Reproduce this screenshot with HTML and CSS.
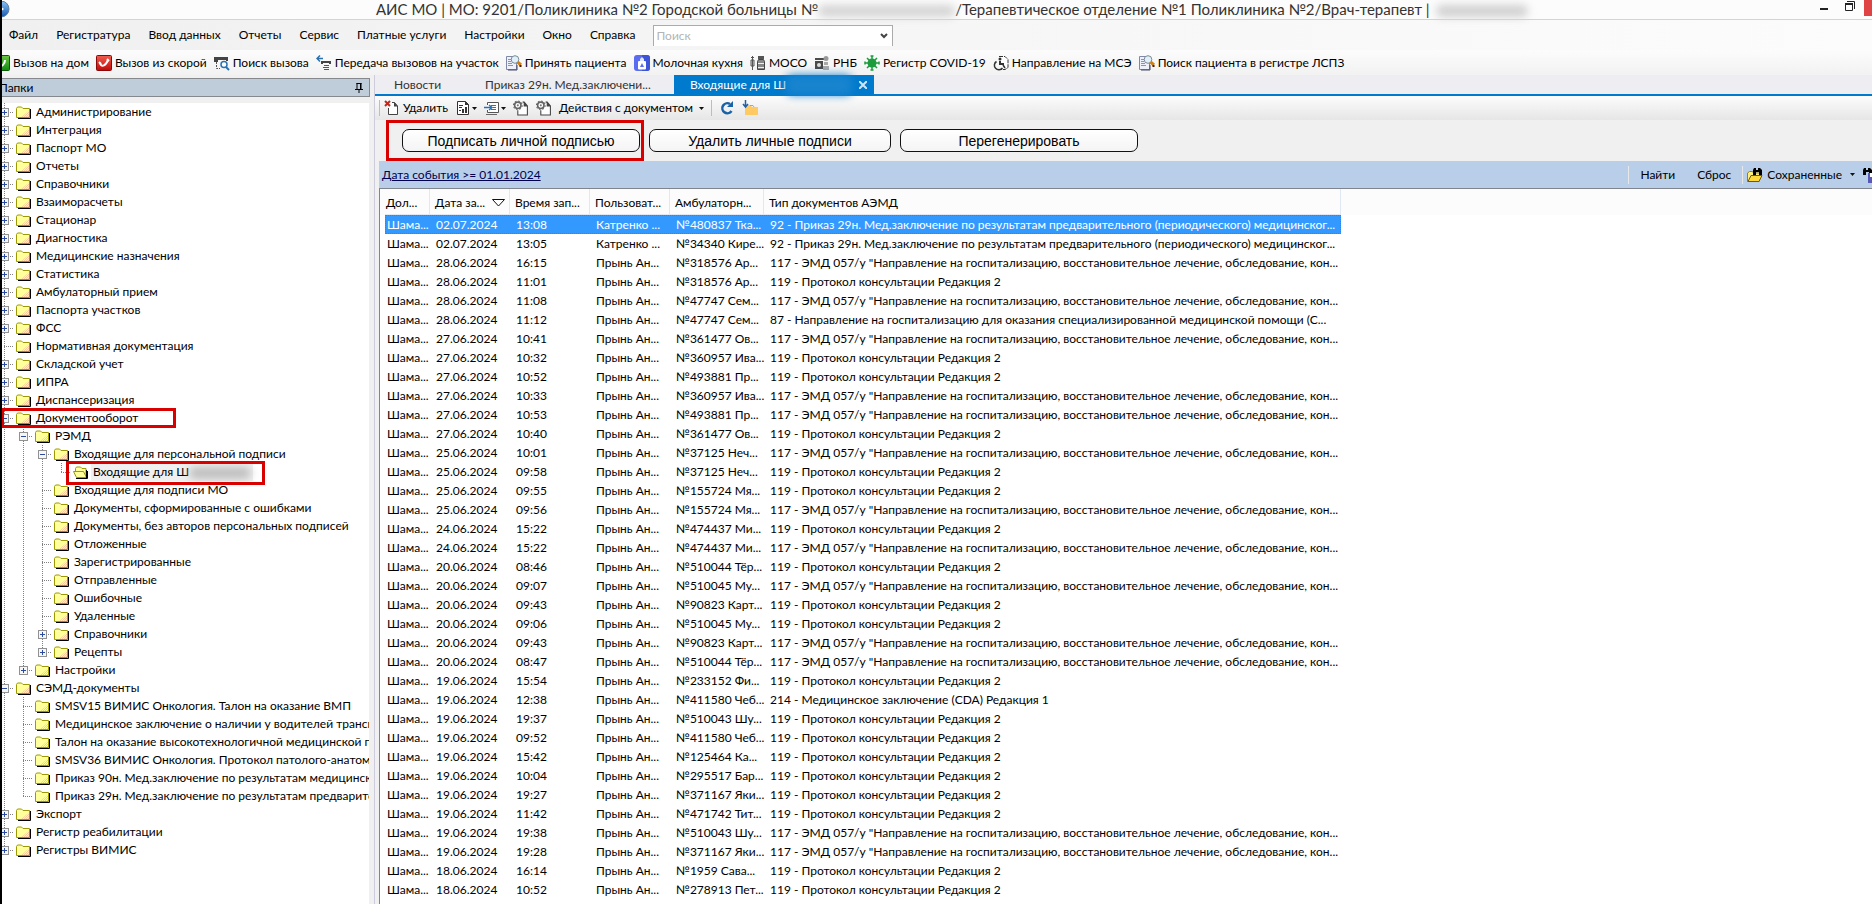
FILE: index.html
```html
<!DOCTYPE html>
<html lang="ru">
<head>
  <meta charset="UTF-8">
  <title>АИС МО</title>
  <link rel="stylesheet" href="styles.css">
</head>
<body>

  <!-- общие значки -->
  <svg class="sprite" aria-hidden="true">
    <defs>
      <pattern id="dither" width="2" height="2" patternUnits="userSpaceOnUse">
        <rect width="1" height="1" fill="#ffc89a"/><rect x="1" y="1" width="1" height="1" fill="#ffc89a"/>
      </pattern>
      <linearGradient id="ball" x1="0" y1="0" x2="0" y2="1">
        <stop offset="0" stop-color="#8cc4f4"/><stop offset="1" stop-color="#1558b0"/>
      </linearGradient>
      <linearGradient id="green" x1="0" y1="0" x2="0" y2="1">
        <stop offset="0" stop-color="#6cc644"/><stop offset="1" stop-color="#0f8a0f"/>
      </linearGradient>
      <linearGradient id="red" x1="0" y1="0" x2="0" y2="1">
        <stop offset="0" stop-color="#f06050"/><stop offset="1" stop-color="#c00808"/>
      </linearGradient>
    </defs>
    <symbol id="folder" viewBox="0 0 15 13">
      <path d="M2 12.5h12.5V3" fill="none" stroke="#000"/>
      <path d="M.5 11.5v-9l1-1.500h4l1.500 1.500h6.500v9z" fill="#ffff9c" stroke="#9c9a00"/>
      <path d="M6 10.500l7-6v6.500H6z" fill="url(#dither)"/>
      <path d="M1 3.500h12" stroke="#fff"/>
    </symbol>
    <symbol id="folder-open" viewBox="0 0 15 13">
      <path d="M3 12.500h11.500V5" fill="none" stroke="#000"/>
      <path d="M2.500 6V2.500l1-1.500h4l1.500 1.500h4v9" fill="#ffff9c" stroke="#9c9a00"/>
      <path d="M.5 5.500h10l3 6h-10z" fill="#ffff9c" stroke="#9c9a00"/>
      <path d="M13.500 4v8" stroke="#000"/>
    </symbol>
    <symbol id="plus" viewBox="0 0 9 9">
      <rect x=".5" y=".5" width="8" height="8" fill="#f6f6f6" stroke="#919191"/>
      <path d="M2 4.500h5M4.500 2v5" stroke="#2c4aa0"/>
    </symbol>
    <symbol id="minus" viewBox="0 0 9 9">
      <rect x=".5" y=".5" width="8" height="8" fill="#f6f6f6" stroke="#919191"/>
      <path d="M2 4.500h5" stroke="#2c4aa0"/>
    </symbol>
    <symbol id="caret" viewBox="0 0 5 3"><path d="M0 0h5L2.500 3z" fill="#111"/></symbol>
    <symbol id="doc-search" viewBox="0 0 16 16">
      <path d="M.5 1.500h10v13H.5z" fill="#eef0fa" stroke="#8088a8"/>
      <path d="M2 4.500h4M2 6.500h3M2 8.500h4M2 10.500h5" stroke="#8a92b8"/>
      <path d="M11 10v5H2" fill="none" stroke="#44486c"/>
      <circle cx="9" cy="4.500" r="3.800" fill="#dff0fa" stroke="#7c8a96"/>
      <path d="M11.500 7l3.500 3" stroke="#d08010" stroke-width="3"/>
      <path d="M14.500 10v2" stroke="#402000" stroke-width="2"/>
    </symbol>
    <symbol id="gear-doc" viewBox="0 0 15 14">
      <path d="M4.500 9v4.500h9V5l-3-3.500H9" fill="#fff" stroke="#444"/>
      <path d="M10 1v4.500h4z" fill="#444"/>
      <circle cx="4.500" cy="4.500" r="3" fill="#fff" stroke="#666" stroke-width="1.500"/>
      <circle cx="4.500" cy="4.500" r="4.100" fill="none" stroke="#666" stroke-dasharray="1.500 1.700"/>
      <circle cx="4.500" cy="4.500" r="1" fill="#777"/>
    </symbol>
  </svg>

  <div class="window">

    <header class="title-bar">
      <svg class="logo" viewBox="0 0 18 18"><circle cx="7" cy="8" r="8" fill="url(#ball)" stroke="#5a7fa8"/><path d="M5 4v8l5-4z" fill="#fff"/></svg>
      <h1>АИС МО | МО: 9201/Поликлиника №2 Городской больницы №<span class="smudge smudge-hospital"></span>/Терапевтическое отделение №1 Поликлиника №2/Врач-терапевт |<span class="smudge smudge-doctor"></span></h1>
      <div class="window-buttons">
        <button aria-label="Свернуть"><svg width="8" height="10" viewBox="0 0 8 10"><path d="M0 9h8" stroke="#222" stroke-width="2"/></svg></button>
        <button aria-label="Восстановить"><svg width="10" height="12" viewBox="0 0 10 12"><path d="M2 1.500h7.500V9M.5 4v6.500h7V4" fill="none" stroke="#222"/><path d="M0 4h8" stroke="#222" stroke-width="2"/></svg></button>
        <button class="close" aria-label="Закрыть"></button>
      </div>
    </header>

    <nav class="menu">
      <button>Файл</button>
      <button>Регистратура</button>
      <button>Ввод данных</button>
      <button>Отчеты</button>
      <button>Сервис</button>
      <button>Платные услуги</button>
      <button>Настройки</button>
      <button>Окно</button>
      <button>Справка</button>
      <div class="search">
        <input type="text" placeholder="Поиск" aria-label="Поиск">
        <button aria-label="Открыть список"><svg width="8" height="6" viewBox="0 0 8 6"><path d="M1 1l3 3 3-3" fill="none" stroke="#444" stroke-width="2"/></svg></button>
      </div>
    </nav>

    <div class="toolbar">
      <button><svg viewBox="0 0 16 16"><rect x=".5" y=".5" width="15" height="15" rx="1" fill="url(#green)" stroke="#0a5a0a"/><path d="M4 11c4 1 7-2 7-6" fill="none" stroke="#fff" stroke-width="2"/></svg>Вызов на дом</button>
      <button><svg viewBox="0 0 16 16"><rect x=".5" y=".5" width="15" height="15" rx="1" fill="url(#red)" stroke="#8a0808"/><path d="M4 8c1 4 5 4 8-3" fill="none" stroke="#fff" stroke-width="2"/><path d="M3 7l2 2M11 4l2 2" stroke="#fff" stroke-width="2"/></svg>Вызов из скорой</button>
      <button><svg viewBox="0 0 16 16"><path d="M0 2h14v4h-2V5H4v2H0z" fill="#444"/><path d="M2.500 7v6.500H6" fill="none" stroke="#555" stroke-dasharray="2 1"/><circle cx="10" cy="9.500" r="3" fill="#fff" stroke="#2a72b0" stroke-width="1.500"/><path d="M12 12l3 3" stroke="#2a72b0" stroke-width="2"/></svg>Поиск вызова</button>
      <button><svg viewBox="0 0 16 16"><path d="M7 3.500H1M4 .500l-3 3 3 3" fill="none" stroke="#2a72b0" stroke-width="1.500"/><path d="M5 6h10v3h-2V8H7v1H5z" fill="#444"/><path d="M8 10.500h5M7 12.500h6M8 14.500h5" stroke="#555"/></svg>Передача вызовов на участок</button>
      <button><svg><use href="#doc-search"/></svg>Принять пациента</button>
      <button><svg viewBox="0 0 16 16"><rect width="16" height="16" rx="3" fill="#5b6cf0"/><path d="M8 0h5a3 3 0 0 1 3 3v10a3 3 0 0 1-3 3H8z" fill="#3c55d8"/><rect x="4" y="6" width="8" height="8.500" rx="1" fill="#fff"/><path d="M6 6V4l2-2 2 2v2z" fill="#dfe4ff"/><path d="M6 12l2-4 2 4z" fill="#5b6cf0"/></svg>Молочная кухня</button>
      <button><svg viewBox="0 0 16 16"><path d="M2.500 1v14M1 5h3v6H1zM1 2.500h3" fill="#ddd" stroke="#555"/><path d="M8 1h6v3H8z" fill="#555"/><path d="M7.500 6.500l1-2h5l1 2v8h-7z" fill="#888" stroke="#444"/><path d="M8 8.500h6M8 12.500h6" stroke="#eee"/></svg>МОСО</button>
      <button><svg viewBox="0 0 16 16"><path d="M1 3h9v2H1zM1 6h8v8H1z" fill="#4a4a4a"/><circle cx="5" cy="10" r="2" fill="#ddd"/><circle cx="12" cy="3.500" r="2.500" fill="#999"/><path d="M10 7h4v3h-4zM9 11h6v4H9z" fill="#aaa"/></svg>РНБ</button>
      <button><svg viewBox="0 0 16 16"><circle cx="8" cy="8" r="4.500" fill="#1c9c3c"/><path d="M8 1v14M1 8h14M3 3l10 10M13 3L3 13" stroke="#1c9c3c" stroke-width="1.500"/><path d="M6.500 1h3M6.500 15h3M1 6.500v3M15 6.500v3" stroke="#1c9c3c" stroke-width="1.500"/></svg>Регистр COVID-19</button>
      <button><svg viewBox="0 0 16 16"><path d="M6 1.500h6l3 3v8l-3 2H8" fill="#fff" stroke="#333" stroke-dasharray="4 1"/><circle cx="7" cy="4" r="1.500" fill="#333"/><path d="M6 6h2v2h3v2H6z" fill="#333"/><path d="M3.500 6.500a4.500 4.500 0 1 0 6 6.500" fill="none" stroke="#333" stroke-width="1.500"/><path d="M10 10l2 3" stroke="#333" stroke-width="1.500"/></svg>Направление на МСЭ</button>
      <button><svg><use href="#doc-search"/></svg>Поиск пациента в регистре ЛСПЗ</button>
    </div>

    <div class="workspace">

      <aside class="folders">
        <div class="panel-head">
          <span>Папки</span>
          <button aria-label="Закрепить"><svg width="8" height="10" viewBox="0 0 8 10"><path d="M2 0v6M6 0v6" stroke="#000"/><path d="M1.500 .500h5M0 6.500h8M4 7v3" stroke="#000"/><path d="M5.500 0v6" stroke="#000"/></svg></button>
        </div>
        <div class="tree" id="tree"></div>
      </aside>

      <main class="content">
        <div class="tabs">
          <button class="tab tab-news">Новости</button>
          <button class="tab tab-order">Приказ 29н. Мед.заключени...</button>
          <button class="tab active">Входящие для Ш<span class="smudge smudge-tab"></span><svg class="tab-close" viewBox="0 0 8 8"><path d="M0 0l8 8M8 0L0 8" stroke="#cfe6fa" stroke-width="2"/></svg></button>
        </div>

        <div class="doc-toolbar">
          <i class="sep"></i>
          <button class="delete"><svg viewBox="0 0 16 16"><path d="M4.500 8v6.500h9V6l-3-3.500H8" fill="#fff" stroke="#444"/><path d="M10 2v4.500h4z" fill="#444"/><path d="M1 1l5 5M6 1L1 6" stroke="#c02a1c" stroke-width="2"/></svg>Удалить</button>
          <button aria-label="Отчеты"><svg viewBox="0 0 16 16"><path d="M2.500 1.500h8l3 3v10h-11z" fill="#fff" stroke="#333"/><path d="M10 1v4h4z" fill="#333"/><path d="M4 5.500h4M4 7.500h3M4 10.500h2" stroke="#333"/><path d="M8 9v4M11 7v6" stroke="#333" stroke-width="2"/></svg><svg class="caret"><use href="#caret"/></svg></button>
          <button aria-label="Перейти"><svg viewBox="0 0 16 16"><path d="M3.500 5V2.500h11v10h-11V10" fill="#fff" stroke="#555"/><path d="M7 5.500h5M9 7.500h3M7 9.500h5M2 14.500h11" stroke="#666"/><path d="M0 7.500h7M5 5l3 2.500L5 10" fill="none" stroke="#2a72b0" stroke-width="1.500"/></svg><svg class="caret"><use href="#caret"/></svg></button>
          <button aria-label="Обработать"><svg><use href="#gear-doc"/></svg></button>
          <button aria-label="Обработать все"><svg><use href="#gear-doc"/></svg></button>
          <button class="doc-menu">Действия с документом<svg class="caret"><use href="#caret"/></svg></button>
          <i class="sep"></i>
          <button aria-label="Обновить"><svg viewBox="0 0 16 16"><path d="M12.500 11A5 5 0 1 1 11 4" fill="none" stroke="#1a62a8" stroke-width="2.500"/><path d="M14 1v6H8z" fill="#1a62a8"/></svg></button>
          <button aria-label="Сохранить в папку"><svg viewBox="0 0 16 16"><path d="M3 5h5l2 2h6v8H3z" fill="#ffc964"/><path d="M8 5.500h3l1 1.500" fill="none" stroke="#e0a030"/><path d="M3.500 0v6M1 4l2.500 3L6 4" fill="none" stroke="#1a62a8" stroke-width="1.500"/></svg></button>
        </div>

        <div class="actions">
          <span class="marked"><button>Подписать личной подписью</button></span>
          <button>Удалить личные подписи</button>
          <button>Перегенерировать</button>
        </div>

        <div class="filter">
          <a href="#">Дата события &gt;= 01.01.2024</a>
          <div class="filter-tools">
            <i class="sep"></i>
            <button>Найти</button>
            <button>Сброс</button>
            <i class="sep"></i>
            <button class="saved"><svg viewBox="0 0 16 16"><path d="M.5 14.500V6l2-1.500h3l1 1.500h6v8z" fill="#ffef80" stroke="#a08000"/><path d="M1 14.500l3-6h11l-3 6z" fill="#ffd83c" stroke="#705800"/><path d="M6 8V3l1-2h2v2h2V1h2l2 2v5h-3V5h-3v3z" fill="#000"/></svg>Сохраненные<svg class="caret"><use href="#caret"/></svg></button>
            <button aria-label="Сохранить поиск"><svg viewBox="0 0 16 16"><path d="M0 8V3l1-2h2v2h2V1h2l2 2v5H6V5H3v3z" fill="#000"/><path d="M5 6h10v10H5z" fill="#5858b8"/><path d="M7 6h6v4H7z" fill="#fff"/></svg></button>
          </div>
        </div>

        <div class="grid">
          <table>
            <colgroup><col class="c-post"><col class="c-date"><col class="c-time"><col class="c-user"><col class="c-card"><col class="c-type"></colgroup>
            <thead>
              <tr>
                <th>Дол...</th>
                <th>Дата за...<svg class="sort" viewBox="0 0 13 8"><path d="M.5 .500h12l-6 6.500z" fill="#fff" stroke="#111"/></svg></th>
                <th>Время зап...</th>
                <th>Пользоват...</th>
                <th>Амбулаторн...</th>
                <th>Тип документов АЭМД</th>
              </tr>
            </thead>
            <tbody id="rows"></tbody>
          </table>
        </div>
      </main>
    </div>
  </div>

  <script>
    const tree = [
      { name: "Администрирование", icon: "plus" },
      { name: "Интеграция", icon: "plus" },
      { name: "Паспорт МО", icon: "plus" },
      { name: "Отчеты", icon: "plus" },
      { name: "Справочники", icon: "plus" },
      { name: "Взаиморасчеты", icon: "plus" },
      { name: "Стационар", icon: "plus" },
      { name: "Диагностика", icon: "plus" },
      { name: "Медицинские назначения", icon: "plus" },
      { name: "Статистика", icon: "plus" },
      { name: "Амбулаторный прием", icon: "plus" },
      { name: "Паспорта участков", icon: "plus" },
      { name: "ФСС", icon: "plus" },
      { name: "Нормативная документация" },
      { name: "Складской учет", icon: "plus" },
      { name: "ИПРА", icon: "plus" },
      { name: "Диспансеризация", icon: "plus" },
      { name: "Документооборот", icon: "minus", mark: "mark-root", items: [
        { name: "РЭМД", icon: "minus", items: [
          { name: "Входящие для персональной подписи", icon: "minus", items: [
            { name: "Входящие для Ш", selected: true, mark: "mark-inbox" }
          ] },
          { name: "Входящие для подписи МО" },
          { name: "Документы, сформированные с ошибками" },
          { name: "Документы, без авторов персональных подписей" },
          { name: "Отложенные" },
          { name: "Зарегистрированные" },
          { name: "Отправленные" },
          { name: "Ошибочные" },
          { name: "Удаленные" },
          { name: "Справочники", icon: "plus" },
          { name: "Рецепты", icon: "plus" }
        ] },
        { name: "Настройки", icon: "plus" }
      ] },
      { name: "СЭМД-документы", icon: "minus", items: [
        { name: "SMSV15 ВИМИС Онкология. Талон на оказание ВМП" },
        { name: "Медицинское заключение о наличии у водителей трансп" },
        { name: "Талон на оказание высокотехнологичной медицинской п" },
        { name: "SMSV36 ВИМИС Онкология. Протокол патолого-анатом" },
        { name: "Приказ 90н. Мед.заключение по результатам медицинск" },
        { name: "Приказ 29н. Мед.заключение по результатам предварите" }
      ] },
      { name: "Экспорт", icon: "plus" },
      { name: "Регистр реабилитации", icon: "plus" },
      { name: "Регистры ВИМИС", icon: "plus" }
    ];

    const types = {
      92: "92 - Приказ 29н. Мед.заключение по результатам предварительного (периодического) медицинског...",
      117: "117 - ЭМД 057/у \"Направление на госпитализацию, восстановительное лечение, обследование, кон...",
      119: "119 - Протокол консультации Редакция 2",
      87: "87 - Направление на госпитализацию для оказания специализированной медицинской помощи (С...",
      214: "214 - Медицинское заключение (CDA) Редакция 1"
    };

    const docs = [
      ["02.07.2024", "13:08", "№480837 Тка...", 92],
      ["02.07.2024", "13:05", "№34340 Кире...", 92],
      ["28.06.2024", "16:15", "№318576 Ар...", 117],
      ["28.06.2024", "11:01", "№318576 Ар...", 119],
      ["28.06.2024", "11:08", "№47747 Сем...", 117],
      ["28.06.2024", "11:12", "№47747 Сем...", 87],
      ["27.06.2024", "10:41", "№361477 Ов...", 117],
      ["27.06.2024", "10:32", "№360957 Ива...", 119],
      ["27.06.2024", "10:52", "№493881 Пр...", 119],
      ["27.06.2024", "10:33", "№360957 Ива...", 117],
      ["27.06.2024", "10:53", "№493881 Пр...", 117],
      ["27.06.2024", "10:40", "№361477 Ов...", 119],
      ["25.06.2024", "10:01", "№37125 Неч...", 117],
      ["25.06.2024", "09:58", "№37125 Неч...", 119],
      ["25.06.2024", "09:55", "№155724 Мя...", 119],
      ["25.06.2024", "09:56", "№155724 Мя...", 117],
      ["24.06.2024", "15:22", "№474437 Ми...", 119],
      ["24.06.2024", "15:22", "№474437 Ми...", 117],
      ["20.06.2024", "08:46", "№510044 Тёр...", 119],
      ["20.06.2024", "09:07", "№510045 Му...", 117],
      ["20.06.2024", "09:43", "№90823 Карт...", 119],
      ["20.06.2024", "09:06", "№510045 Му...", 119],
      ["20.06.2024", "09:43", "№90823 Карт...", 117],
      ["20.06.2024", "08:47", "№510044 Тёр...", 117],
      ["19.06.2024", "15:54", "№233152 Фи...", 119],
      ["19.06.2024", "12:38", "№411580 Чеб...", 214],
      ["19.06.2024", "19:37", "№510043 Шу...", 119],
      ["19.06.2024", "09:52", "№411580 Чеб...", 119],
      ["19.06.2024", "15:42", "№125464 Ка...", 119],
      ["19.06.2024", "10:04", "№295517 Бар...", 119],
      ["19.06.2024", "19:27", "№371167 Яки...", 119],
      ["19.06.2024", "11:42", "№471742 Тит...", 119],
      ["19.06.2024", "19:38", "№510043 Шу...", 117],
      ["19.06.2024", "19:28", "№371167 Яки...", 117],
      ["18.06.2024", "16:14", "№1959 Сава...", 119],
      ["18.06.2024", "10:52", "№278913 Пет...", 119]
    ];

    // guides - классы вертикальных линий родительских уровней
    function renderTree(items, guides) {
      return items.map((item, i) => {
        const last = i === items.length - 1;
        const branch = last ? "cell branch last" : "cell branch";
        const row = `
          <div class="node">
            ${guides.map(g => `<span class="cell ${g}"></span>`).join("")}
            <span class="${branch}">${item.icon ? `<svg class="expander"><use href="#${item.icon}"/></svg>` : ""}</span>
            <svg class="folder"><use href="#${item.selected ? "folder-open" : "folder"}"/></svg>
            <span class="label${item.selected ? " selected" : ""}">${item.name}${item.selected ? `<span class="smudge smudge-node"></span>` : ""}</span>
            ${item.mark ? `<span class="mark ${item.mark}"></span>` : ""}
          </div>`;
        return row + (item.items ? renderTree(item.items, guides.concat(last ? "empty" : "line")) : "");
      }).join("");
    }

    function renderRows() {
      return docs.map(([date, time, card, type], i) => `
        <tr${i === 0 ? ` class="current"` : ""}>
          <td>Шама...</td><td>${date}</td><td>${time}</td>
          <td>${i < 2 ? "Катренко ..." : "Прынь Ан..."}</td>
          <td>${card}</td><td>${types[type]}</td>
        </tr>`).join("");
    }

    document.getElementById("tree").innerHTML = renderTree(tree, []);
    document.getElementById("rows").innerHTML = renderRows();
  </script>

</body>
</html>
```
FILE: styles.css
```css
* {
  box-sizing: border-box;
}
body {
  margin: 0;
  height: 100vh;
  overflow: hidden;
  border-left: 2px solid #000;
  background: #f0f0f0;
  color: #000;
  font-family: Lato, "Noto Sans", sans-serif;
  font-size: 12px;
  line-height: 18px;
  white-space: nowrap;
}
button {
  border: 0;
  padding: 0;
  background: none;
  color: inherit;
  font: inherit;
  white-space: nowrap;
}
.sprite {
  position: absolute;
  width: 0;
  height: 0;
}
/* окно сдвинуто за левый край экрана */
.window {
  display: flex;
  flex-direction: column;
  height: 100%;
  margin-left: -8px;
}
.smudge {
  display: inline-block;
  height: 12px;
  border-radius: 6px;
  vertical-align: middle;
  filter: blur(4px);
}

/* заголовок */
.title-bar {
  display: flex;
  align-items: center;
  height: 20px;
  flex-shrink: 0;
  background: #fcfcfc;
  border-bottom: 1px solid #d4d4d4;
}
.logo {
  width: 18px;
  height: 18px;
  flex-shrink: 0;
  margin-right: 364px;
}
.title-bar h1 {
  flex: 1;
  align-self: flex-start;
  margin: 0;
  color: #333;
  font-size: 15px;
  font-weight: normal;
  line-height: 18px;
}
.smudge-hospital {
  width: 137px;
  background: #d4d4d4;
}
.smudge-doctor {
  width: 92px;
  margin-left: 6px;
  background: #d0d0d0;
}
.window-buttons {
  display: flex;
  align-self: flex-start;
  gap: 17px;
}
.window-buttons button {
  display: flex;
  height: 16px;
}
.window-buttons .close {
  width: 8px;
  margin-left: -8px;
  background: #e04343;
}

/* меню */
.menu {
  display: flex;
  align-items: center;
  gap: 18px;
  height: 30px;
  flex-shrink: 0;
  padding-left: 15px;
  background: linear-gradient(to right, #f0f0f0, #fcfcfc);
}
.search {
  display: flex;
  align-items: center;
  width: 240px;
  height: 21px;
  border: 1px solid #ababab;
  border-bottom: 0;
  background: #fff;
}
.search input {
  flex: 1;
  min-width: 0;
  border: 0;
  padding: 0 2px;
  background: none;
  font: inherit;
  outline: none;
}
.search input::placeholder {
  color: #b4b4b4;
}
.search button {
  display: flex;
  padding: 0 4px;
}

/* панель инструментов */
.toolbar {
  display: flex;
  align-items: center;
  gap: 7px;
  height: 25px;
  flex-shrink: 0;
  background: linear-gradient(#fcfcfc, #f2f2f2);
}
.toolbar button {
  display: flex;
  align-items: center;
  gap: 3px;
}
.toolbar svg {
  width: 16px;
  height: 16px;
}

.workspace {
  display: flex;
  flex: 1;
  min-height: 0;
}

/* дерево папок */
.folders {
  display: flex;
  flex-direction: column;
  width: 376px;
  flex-shrink: 0;
  padding-top: 3px;
}
.panel-head {
  display: flex;
  align-items: center;
  justify-content: space-between;
  height: 19px;
  flex-shrink: 0;
  margin-bottom: 6px;
  padding: 0 6px 0 4px;
  border: 1px solid #85898e;
  background: #bfcddb;
}
.panel-head button {
  display: flex;
}
.tree {
  flex: 1;
  overflow: hidden;
  padding-left: 1px;
  background: #fff;
  margin-right: 1px;
}
.node {
  display: flex;
  align-items: center;
  position: relative;
  height: 18px;
}
.cell {
  display: flex;
  align-items: center;
  justify-content: center;
  width: 19px;
  height: 18px;
  flex-shrink: 0;
  background-repeat: no-repeat;
}
.cell.line {
  background-image: repeating-linear-gradient(#808080 0 1px, transparent 1px 2px);
  background-position: 9px 0;
  background-size: 1px 18px;
}
.cell.branch {
  background-image: repeating-linear-gradient(#808080 0 1px, transparent 1px 2px), repeating-linear-gradient(to right, #808080 0 1px, transparent 1px 2px);
  background-position: 9px 0, 9px 9px;
  background-size: 1px 18px, 10px 1px;
}
.cell.last {
  background-size: 1px 9px, 10px 1px;
}
.expander {
  width: 9px;
  height: 9px;
}
.folder {
  width: 15px;
  height: 13px;
  flex-shrink: 0;
  margin: 0 3px 0 2px;
}
.label {
  padding: 0 2px;
}
.label.selected {
  background: #f0f0f0;
}
.smudge-node {
  width: 62px;
  background: #bdbdbd;
}
/* красная рамка поверх строк */
.mark {
  position: absolute;
  border: 3px solid #d90000;
  z-index: 1;
}
.mark-root {
  top: -1px;
  bottom: -1px;
  left: 6px;
  width: 175px;
}
.mark-inbox {
  top: -2px;
  bottom: -4px;
  left: 71px;
  width: 199px;
}

/* рабочая область */
.content {
  display: flex;
  flex-direction: column;
  flex: 1;
  min-width: 0;
  margin-left: 4px;
  border-left: 1px solid #ccccdc;
}
.tabs {
  display: flex;
  height: 21px;
  flex-shrink: 0;
  padding-left: 3px;
  border-bottom: 2px solid #007acc;
  background: #eeeef2;
}
.tab {
  display: flex;
  align-items: center;
  padding: 0 7px 0 16px;
  color: #333;
}
.tab-news {
  width: 91px;
}
.tab-order {
  width: 205px;
}
.tab.active {
  width: 200px;
  background: #007acc;
  color: #fff;
}
.smudge-tab {
  width: 66px;
  height: 20px;
  background: #1884cf;
}
.tab-close {
  width: 8px;
  height: 8px;
  margin-left: auto;
}
.doc-toolbar {
  display: flex;
  align-items: center;
  gap: 7px;
  height: 24px;
  flex-shrink: 0;
  padding-left: 4px;
  background: linear-gradient(#fcfcfc, #e6e6e6);
}
.doc-toolbar button {
  display: flex;
  align-items: center;
  gap: 1px;
}
.doc-toolbar .delete {
  gap: 3px;
  margin-left: -3px;
}
.doc-toolbar .doc-menu {
  gap: 6px;
}
.doc-toolbar svg,
.filter svg {
  width: 16px;
  height: 16px;
}
.doc-toolbar .caret,
.filter .caret {
  width: 5px;
  height: 3px;
}
.sep {
  width: 1px;
  height: 16px;
  background: #bdbdbd;
}
.actions {
  display: flex;
  align-items: center;
  gap: 9px;
  height: 41px;
  flex-shrink: 0;
  padding-left: 27px;
}
.actions button {
  width: 242px;
  height: 23px;
  border: 1px solid #111;
  border-radius: 7px;
  background: linear-gradient(#fff, #f4f4f4);
  font: 14px "Liberation Sans", Arial, sans-serif;
}
.marked {
  display: flex;
  position: relative;
}
.actions .marked button,
.actions button:last-child {
  width: 238px;
}
.marked::after {
  content: "";
  position: absolute;
  inset: -9px -4px -9px -16px;
  border: 3px solid #d90000;
}
.filter {
  display: flex;
  align-items: center;
  justify-content: space-between;
  height: 27px;
  flex-shrink: 0;
  margin-left: 4px;
  padding-left: 3px;
  overflow: hidden;
  background: #b9cfe9;
}
.filter a {
  color: #000050;
}
.filter-tools {
  display: flex;
  align-items: center;
  gap: 11px;
  margin-right: -7px;
}
.filter-tools button + button {
  margin-left: 11px;
}
.filter-tools .saved {
  display: flex;
  align-items: center;
  gap: 4px;
  margin: 0 -7px;
}
.filter-tools .saved + button {
  display: flex;
  margin-left: 4px;
}
.saved .caret {
  margin-left: 4px;
}
.filter .sep {
  height: 18px;
  background: #e8e8e8;
}

/* таблица документов */
.grid {
  flex: 1;
  overflow: hidden;
  margin-left: 4px;
  border-top: 1px solid #80848c;
  border-left: 1px solid #80848c;
  padding-left: 5px;
  background: linear-gradient(#fcfcfc 26px, #fff 26px);
}
table {
  width: 956px;
  border-collapse: separate;
  border-spacing: 0;
  table-layout: fixed;
}
.c-post { width: 45px; }
.c-date { width: 80px; }
.c-time { width: 80px; }
.c-user { width: 80px; }
.c-card { width: 94px; }
th {
  height: 26px;
  padding: 2px 0 0 5px;
  border-right: 1px solid #e0e8f4;
  border-bottom: 1px solid #e0e8f4;
  font-weight: normal;
  text-align: left;
}
th:first-child {
  padding-left: 1px;
}
.sort {
  width: 13px;
  height: 8px;
  margin-left: 7px;
}
td {
  height: 19px;
  padding: 0 0 0 6px;
  overflow: hidden;
}
td:first-child {
  padding-left: 2px;
}
.current {
  background: #3399ff;
  color: #fff;
  outline: 1px dotted #c86400;
  outline-offset: -1px;
}
```
